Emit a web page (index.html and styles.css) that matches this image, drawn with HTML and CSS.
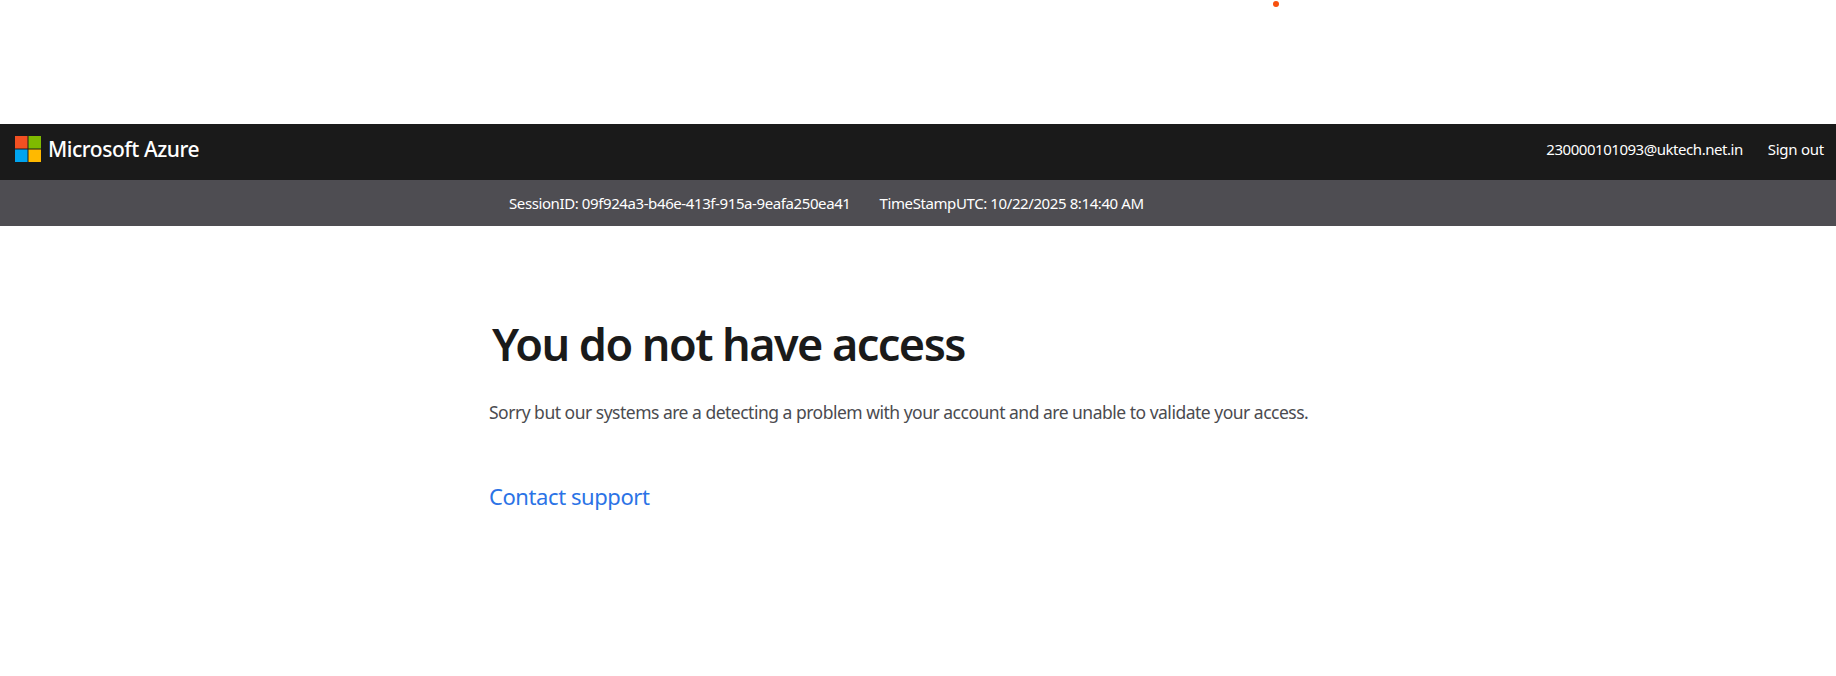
FILE: index.html
```html
<!DOCTYPE html>
<html lang="en">
<head>
<meta charset="utf-8">
<title>You do not have access</title>
<link rel="stylesheet" href="styles.css">
</head>
<body>
<span class="loader-dot"></span>
<header class="topbar">
  <a class="brand" href="#">
    <svg class="ms-logo" viewBox="0 0 26 26" width="26" height="26" aria-hidden="true">
      <rect x="0" y="0" width="12.5" height="12.5" fill="#f25022"/>
      <rect x="13.5" y="0" width="12.5" height="12.5" fill="#7fba00"/>
      <rect x="0" y="13.5" width="12.5" height="12.5" fill="#00a4ef"/>
      <rect x="13.5" y="13.5" width="12.5" height="12.5" fill="#ffb900"/>
    </svg>
    <span class="brand-name">Microsoft Azure</span>
  </a>
  <nav class="user-nav">
    <span class="user-email">230000101093@uktech.net.in</span>
    <a class="sign-out" href="#">Sign out</a>
  </nav>
</header>
<div class="session-bar">
  <span class="session-id">SessionID: 09f924a3-b46e-413f-915a-9eafa250ea41</span>
  <span class="session-time">TimeStampUTC: 10/22/2025 8:14:40 AM</span>
</div>
<main class="content">
  <h1 class="title">You do not have access</h1>
  <p class="message">Sorry but our systems are a detecting a problem with your account and are unable to validate your access.</p>
  <a class="support" href="#">Contact support</a>
</main>
</body>
</html>
```
FILE: styles.css
```css
* { box-sizing: border-box; }
html, body { height: 100%; }
body {
  margin: 0;
  padding-top: 124px;
  background: #fff;
  font-family: "Noto Sans", "Open Sans", sans-serif;
  overflow: hidden;
}
a { text-decoration: none; }
.loader-dot {
  position: absolute;
  left: 1273px;
  top: 1px;
  width: 6px;
  height: 6px;
  border-radius: 50%;
  background: #f7500e;
}
.topbar {
  display: flex;
  justify-content: space-between;
  align-items: center;
  height: 56px;
  padding: 0 12px 6px 15px;
  background: #1a1a1a;
  color: #fff;
}
.brand { display: flex; align-items: center; gap: 7px; color: #fff; }
.ms-logo { display: block; }
.brand-name { font-size: 21px; font-weight: 500; letter-spacing: -0.47px; }
.user-nav { display: flex; gap: 25px; font-size: 15px; letter-spacing: -0.46px; }
.sign-out { color: #fff; letter-spacing: -0.25px; }
.session-bar {
  display: flex;
  gap: 29px;
  align-items: center;
  height: 46px;
  padding-left: 509px;
  background: #4e4d52;
  color: #fff;
  font-size: 15px;
  letter-spacing: -0.4px;
}
.content { padding: 0 0 0 489px; }
.title {
  margin: 90px 0 0 3px;
  font-size: 45px;
  line-height: 56px;
  font-weight: 600;
  letter-spacing: -1.55px;
  color: #1a1a1a;
}
.message {
  margin: 28px 0 0;
  font-size: 17.5px;
  line-height: 24px;
  color: #4b4b4f;
  letter-spacing: -0.5px;
}
.support {
  display: inline-block;
  margin-top: 57px;
  font-size: 22px;
  line-height: 30px;
  color: #2b73e6;
  letter-spacing: -0.42px;
}
```
